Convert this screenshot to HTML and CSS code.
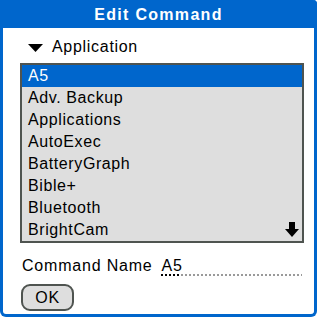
FILE: index.html
```html
<!DOCTYPE html>
<html lang="en">
<head>
  <meta charset="UTF-8">
  <title>Edit Command</title>
  <link rel="stylesheet" href="styles.css">
</head>
<body>
  <!-- Modal form frame -->
  <div class="form">
    <div class="title">Edit Command</div>

    <div class="content">
      <!-- Category popup trigger -->
      <div class="popup">
        <svg class="popup-arrow" width="15" height="8" viewBox="0 0 15 8">
          <polygon points="0,0 15,0 7.5,8" fill="#000"/>
        </svg>
        <span>Application</span>
      </div>

      <!-- Application list -->
      <div class="list">
        <div class="row selected">A5</div>
        <div class="row">Adv. Backup</div>
        <div class="row">Applications</div>
        <div class="row">AutoExec</div>
        <div class="row">BatteryGraph</div>
        <div class="row">Bible+</div>
        <div class="row">Bluetooth</div>
        <div class="row">BrightCam</div>
        <svg class="scroll-arrow" width="14" height="15" viewBox="0 0 14 15">
          <polygon points="4,0 10,0 10,7 14,7 7,15 0,7 4,7" fill="#000"/>
        </svg>
      </div>

      <!-- Command name field -->
      <div class="field-row">
        <span class="label">Command Name</span>
        <span class="field"><span class="field-text">A5</span></span>
      </div>

      <button class="ok">OK</button>
    </div>
  </div>
</body>
</html>
```

FILE: styles.css
```css
/* Basic Reset */
body, div, button, span {
  margin: 0;
  padding: 0;
  box-sizing: border-box;
}

body {
  background-color: #fff;
  font-family: "Liberation Sans", Arial, sans-serif;
  font-size: 16px;
  color: #000;
}

/* Dialog frame */
.form {
  width: 317px;
  height: 317px;
  border: 3px solid #0066cc;
  border-top: none;
  border-radius: 0 4px 6px 6px;
  display: flex;
  flex-direction: column;
}

/* Blue title bar */
.title {
  height: 28px;
  margin: 0 -3px;
  background-color: #0066cc;
  border-radius: 0 4px 0 0;
  color: #fff;
  font-weight: bold;
  font-size: 16px;
  letter-spacing: 1.3px;
  line-height: 29px;
  text-align: center;
}

.content {
  display: flex;
  flex-direction: column;
  align-items: flex-start;
  padding-left: 17px;
}

/* Popup trigger */
.popup {
  display: flex;
  align-items: center;
  gap: 9px;
  margin-top: 9px;
  padding-left: 8px;
  height: 20px;
  letter-spacing: 0.7px;
}

.popup-arrow {
  margin-top: 1px;
}

/* List box */
.list {
  position: relative;
  width: 284px;
  margin-top: 6px;
  border: 2px solid #4f5450;
  background-color: #dedede;
}

.row {
  height: 22px;
  line-height: 22px;
  padding-left: 6px;
  letter-spacing: 0.6px;
}

.row.selected {
  background-color: #0066cc;
  color: #fff;
}

.scroll-arrow {
  position: absolute;
  right: 3px;
  bottom: 4px;
}

/* Command name */
.field-row {
  display: flex;
  align-items: flex-start;
  gap: 8px;
  margin-top: 13px;
  height: 22px;
  line-height: 20px;
  letter-spacing: 0.8px;
}

.label {
  padding-left: 2px;
}

.field {
  width: 141px;
  height: 20px;
  padding-left: 1px;
  background-image: repeating-linear-gradient(90deg, #000 0 2px, transparent 2px 4px),
    repeating-linear-gradient(90deg, #9a9a9a 0 2px, transparent 2px 4px);
  background-size: 20px 2px, 100% 2px;
  background-position: 0 bottom, 20px bottom;
  background-repeat: no-repeat;
}

.field-text {
  display: block;
  height: 18px;
}

/* OK button */
.ok {
  margin-top: 6px;
  margin-left: 1px;
  width: 53px;
  height: 27px;
  border: 2px solid #4f5450;
  border-radius: 9px;
  background-color: #dedede;
  font-family: "Liberation Sans", Arial, sans-serif;
  font-size: 16px;
  letter-spacing: 0.8px;
  color: #000;
  line-height: 22px;
}
```
